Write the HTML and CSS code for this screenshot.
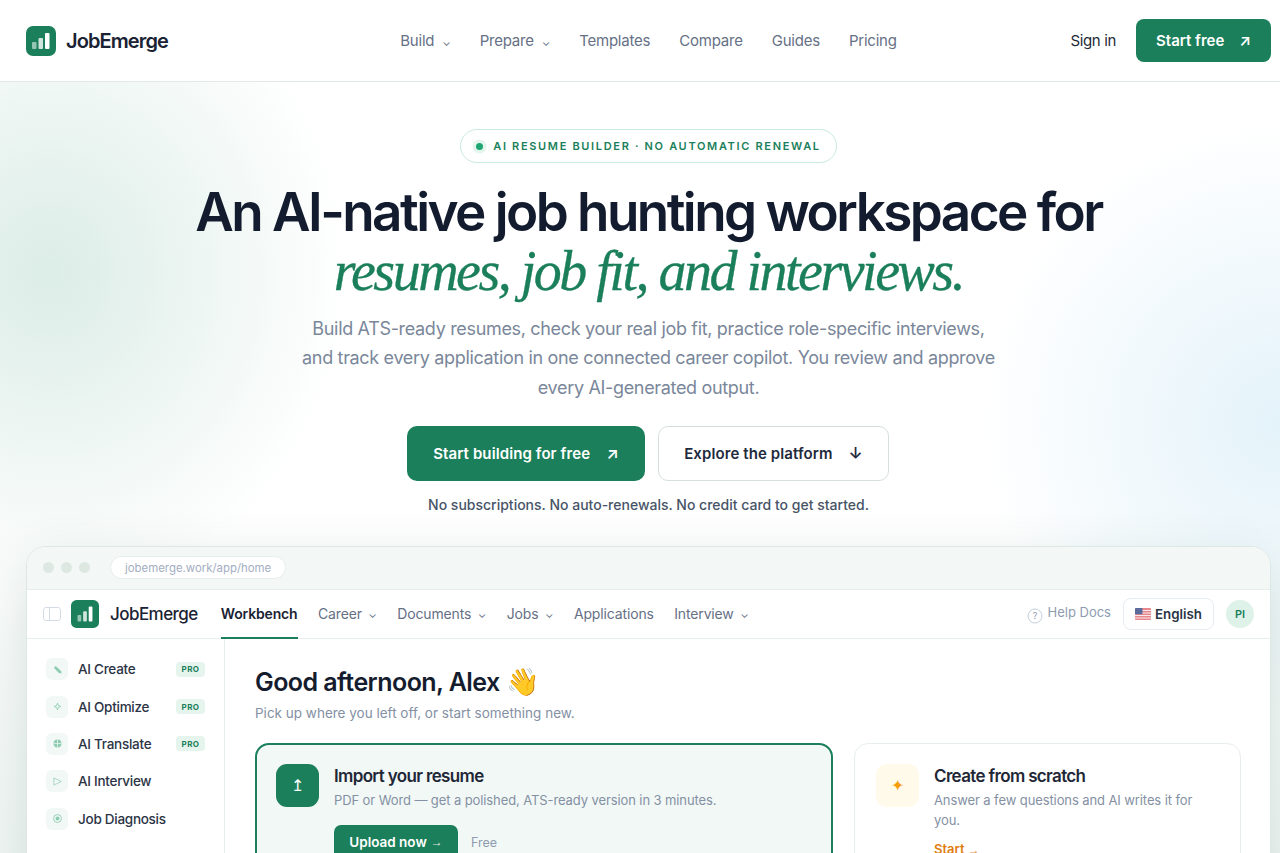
FILE: index.html
```html
<!DOCTYPE html>
<html lang="en">
<head>
<meta charset="utf-8">
<title>JobEmerge</title>
<link rel="stylesheet" href="styles.css">
</head>
<body>
<header class="topbar">
  <a class="brand">
    <svg class="logo" viewBox="0 0 30 30"><rect width="30" height="30" rx="7" fill="#1a7f5a"/><rect x="6" y="16" width="4.5" height="7" rx="1" fill="#fff" opacity=".55"/><rect x="12.5" y="12" width="4.5" height="11" rx="1" fill="#fff" opacity=".8"/><rect x="19" y="7" width="4.5" height="16" rx="1" fill="#fff"/></svg>
    <span class="brand-name">JobEmerge</span>
  </a>
  <nav class="topnav">
    <a>Build<i class="caret">⌄</i></a>
    <a>Prepare<i class="caret">⌄</i></a>
    <a>Templates</a>
    <a>Compare</a>
    <a>Guides</a>
    <a>Pricing</a>
  </nav>
  <div class="top-actions">
    <a class="signin">Sign in</a>
    <a class="btn-top">Start free<span class="btn-arrow">↗</span></a>
  </div>
</header>

<main class="hero">
  <div class="pill"><span class="pill-dot"></span>AI RESUME BUILDER · NO AUTOMATIC RENEWAL</div>
  <h1 class="headline">An AI-native job hunting workspace for<em>resumes, job fit, and interviews.</em></h1>
  <p class="lead">Build ATS-ready resumes, check your real job fit, practice role-specific interviews, and track every application in one connected career copilot. You review and approve every AI-generated output.</p>
  <div class="cta-row">
    <a class="cta cta-primary">Start building for free<span class="cta-icon">↗</span></a>
    <a class="cta cta-ghost">Explore the platform<span class="cta-icon">↓</span></a>
  </div>
  <p class="note">No subscriptions. No auto-renewals. No credit card to get started.</p>

  <section class="window">
    <div class="chrome">
      <span class="light"></span><span class="light"></span><span class="light"></span>
      <span class="url">jobemerge.work/app/home</span>
    </div>
    <div class="appnav">
      <svg class="panel-ico" viewBox="0 0 18 16"><rect x=".5" y="1.5" width="17" height="13" rx="2.5" fill="none" stroke="#d3dbe6"/><path d="M6.5 2v12" stroke="#d3dbe6"/></svg>
      <svg class="app-logo" viewBox="0 0 30 30"><rect width="30" height="30" rx="6" fill="#1a7f5a"/><rect x="7" y="16" width="4" height="7" rx="1" fill="#fff" opacity=".55"/><rect x="13" y="12" width="4" height="11" rx="1" fill="#fff" opacity=".8"/><rect x="19" y="7" width="4" height="16" rx="1" fill="#fff"/></svg>
      <span class="app-name">JobEmerge</span>
      <div class="app-tabs">
        <a class="tab tab-on">Workbench</a>
        <a class="tab">Career<i class="caret">⌄</i></a>
        <a class="tab">Documents<i class="caret">⌄</i></a>
        <a class="tab">Jobs<i class="caret">⌄</i></a>
        <a class="tab">Applications</a>
        <a class="tab">Interview<i class="caret">⌄</i></a>
      </div>
      <div class="app-right">
        <a class="help"><svg class="help-ico" viewBox="0 0 16 16"><circle cx="8" cy="8" r="7" fill="none" stroke="#c3cede"/><text x="8" y="11" text-anchor="middle" class="help-q">?</text></svg><span class="help-text">Help Docs</span></a>
        <a class="lang"><svg class="flag" viewBox="0 0 16 12"><rect width="16" height="12" rx="1" fill="#e8868c"/><path d="M0 2.5h16M0 5h16M0 7.5h16M0 10h16" stroke="#f6e9ea" stroke-width="1.1"/><rect width="7.5" height="6.2" rx="1" fill="#5a6c9c"/></svg>English</a>
        <span class="avatar">PI</span>
      </div>
    </div>
    <div class="app-body">
      <aside class="side">
        <a class="side-item"><span class="side-ico"><svg viewBox="0 0 10 10"><path d="M1 3 3 1l6 5.6.5 2.9-3-.6z" fill="#8fcdb3"/></svg></span>AI Create<b class="pro">PRO</b></a>
        <a class="side-item"><span class="side-ico"><svg viewBox="0 0 10 10"><path d="M5 1.2 6 4l2.8 1L6 6 5 8.8 4 6 1.2 5 4 4z" fill="none" stroke="#8fcdb3"/></svg></span>AI Optimize<b class="pro">PRO</b></a>
        <a class="side-item"><span class="side-ico"><svg viewBox="0 0 10 10"><circle cx="5" cy="5" r="4.4" fill="#8fcdb3"/><path d="M5 .6v8.8M.6 5h8.8" stroke="#f2f8f5" stroke-width=".8"/></svg></span>AI Translate<b class="pro">PRO</b></a>
        <a class="side-item"><span class="side-ico"><svg viewBox="0 0 10 10"><path d="M1 1 9.2 5 1 9z" fill="none" stroke="#8fcdb3" stroke-width=".8"/></svg></span>AI Interview</a>
        <a class="side-item"><span class="side-ico"><svg viewBox="0 0 10 10"><circle cx="5" cy="5" r="4.4" fill="none" stroke="#8fcdb3"/><circle cx="5" cy="5" r="2.2" fill="#8fcdb3"/></svg></span>Job Diagnosis</a>
      </aside>
      <div class="content">
        <h2 class="greet">Good afternoon, Alex <span class="wave">👋</span></h2>
        <p class="greet-sub">Pick up where you left off, or start something new.</p>
        <div class="cards">
          <article class="card card-main">
            <span class="card-ico ico-green">↥</span>
            <div class="card-text">
              <h3>Import your resume</h3>
              <p>PDF or Word — get a polished, ATS-ready version in 3 minutes.</p>
              <div class="card-foot"><a class="upload">Upload now <span class="thin-arrow">→</span></a><span class="free">Free</span></div>
            </div>
          </article>
          <article class="card card-side">
            <span class="card-ico ico-amber">✦</span>
            <div class="card-text">
              <h3>Create from scratch</h3>
              <p>Answer a few questions and AI writes it for you.</p>
              <a class="start">Start <span class="thin-arrow">→</span></a>
            </div>
          </article>
        </div>
      </div>
    </div>
  </section>
</main>
</body>
</html>
```
FILE: styles.css
```css
* { box-sizing: border-box; }
html, body { margin: 0; height: 853px; overflow: hidden; }
body { font-family: "Inter", "Noto Sans", sans-serif; color: #141c2e; background: #fff; }
a { text-decoration: none; color: inherit; }
i { font-style: normal; }

.topbar { height: 82px; display: grid; grid-template-columns: 1fr auto 1fr; align-items: center; padding: 0 9px 0 26px; border-bottom: 1px solid #e1eae7; background: #fff; }
.brand { display: flex; align-items: center; gap: 10px; }
.logo { width: 30px; height: 30px; display: block; }
.brand-name { font-size: 20px; font-weight: 600; letter-spacing: -0.9px; color: #1a2233; }
.topnav { display: flex; gap: 29px; font-size: 15px; color: #667085; letter-spacing: -0.22px; }
.topnav a { display: flex; align-items: baseline; }
.caret { font-size: 11px; margin-left: 8px; }
.top-actions { display: flex; align-items: center; justify-content: flex-end; gap: 20px; }
.signin { font-size: 15px; color: #1f2937; letter-spacing: -0.35px; }
.btn-top { height: 43px; width: 135px; display: flex; align-items: center; justify-content: center; gap: 15px; background: #1a7f5a; color: #fff; border-radius: 8px; font-size: 15px; font-weight: 600; }
.btn-arrow { font-size: 15px; }

.hero { height: 771px; padding: 47px 9px 0 26px; display: flex; flex-direction: column; align-items: center;
  background:
    radial-gradient(ellipse 300px 330px at 50px 190px, rgba(196,224,214,.6), rgba(196,224,214,0) 100%),
    radial-gradient(ellipse 300px 300px at 1280px 340px, rgba(205,232,245,.55), rgba(205,232,245,0) 100%),
    linear-gradient(#fff 420px, #f2f7f5 100%);
}
.hero > * { flex: none; }
.pill { height: 34px; width: 377px; display: flex; align-items: center; justify-content: center; gap: 8px; border: 1px solid #c8ebdc; border-radius: 17px; background: #fff; font-size: 11px; font-weight: 600; letter-spacing: 1.67px; color: #1a7f5a; }
.pill-dot { width: 7px; height: 7px; border-radius: 50%; background: #1ea672; box-shadow: 0 0 0 3.5px #e4f5ed; margin-right: 2px; }
.headline { margin: 20px 0 0; font-size: 53px; line-height: 59px; font-weight: 600; letter-spacing: -2.55px; text-align: center; color: #131b2e; }
.headline em { display: block; font-family: "Liberation Serif", serif; font-style: italic; font-weight: 400; font-size: 56px; letter-spacing: -2.5px; color: #1a7f5a; -webkit-text-stroke: .3px #1a7f5a; }
.lead { margin: 13px 0 0; width: 700px; font-size: 18px; line-height: 29.4px; text-align: center; color: #7a879a; letter-spacing: -0.33px; }
.cta-row { display: flex; gap: 13px; margin: 23.3px 0 0 -1px; }
.cta { height: 55px; display: flex; align-items: center; justify-content: center; gap: 16px; border-radius: 10px; font-size: 15px; font-weight: 600; letter-spacing: .1px; }
.cta-primary { width: 238px; background: #1a7f5a; color: #fff; }
.cta-ghost { width: 231px; background: #fff; color: #1f2a3d; border: 1px solid #d5e0dd; }
.cta-icon { font-size: 16px; }
.note { margin: 15px 0 0; font-size: 14px; line-height: 18px; font-weight: 500; color: #475467; }

.window { width: 1245px; margin: 32px 0 0; border: 1px solid #dde8e4; border-radius: 20px 20px 0 0; background: #fff; box-shadow: 0 24px 60px rgba(26,80,60,.16); }
.chrome { height: 43px; display: flex; align-items: center; padding-left: 16px; gap: 7px; background: #f3f8f6; border-radius: 19px 19px 0 0; border-bottom: 1px solid #e6eeeb; }
.light { width: 11px; height: 11px; border-radius: 50%; background: #dde8e3; }
.url { margin-left: 13px; height: 23px; padding: 0 14px; display: flex; align-items: center; background: #fff; border: 1px solid #e6eeeb; border-radius: 12px; font-size: 11.4px; color: #a3aec2; }
.appnav { height: 49px; display: flex; align-items: center; padding: 0 16px 0 16px; border-bottom: 1px solid #e6eeeb; }
.panel-ico { width: 18px; height: 16px; flex: none; }
.app-logo { width: 28px; height: 28px; margin-left: 10px; flex: none; }
.app-name { margin-left: 11px; font-size: 17px; font-weight: 500; letter-spacing: -0.55px; color: #1a2233; }
.app-tabs { display: flex; height: 49px; gap: 20.5px; margin-left: 23px; }
.tab { display: flex; align-items: center; font-size: 14px; color: #667085; letter-spacing: -0.15px; position: relative; }
.tab .caret { margin-left: 6.5px; font-size: 11px; }
.tab-on { font-weight: 600; color: #1a2233; }
.tab-on::after { content: ""; position: absolute; left: 0; right: 0; bottom: -1px; height: 2px; background: #1a7f5a; }
.app-right { margin-left: auto; display: flex; align-items: center; }
.help { display: flex; align-items: center; gap: 5px; font-size: 13px; color: #8e9bb0; }
.help-ico { width: 16px; height: 16px; margin-top: 4px; }
.help-text { margin-top: -3px; }
.help-q { font-size: 9px; fill: #8e9bb0; }
.lang { margin-left: 12px; height: 32px; width: 91px; display: flex; align-items: center; justify-content: center; gap: 4px; border: 1px solid #e6ecf1; border-radius: 8px; font-size: 13.3px; font-weight: 600; color: #2b3445; }
.flag { width: 16px; height: 12px; }
.avatar { margin-left: 12px; width: 28px; height: 28px; border-radius: 50%; background: #dff2ea; color: #1a7f5a; font-size: 11px; font-weight: 600; display: flex; align-items: center; justify-content: center; }

.app-body { display: flex; }
.side { width: 198px; height: 300px; border-right: 1px solid #e6eeeb; padding: 12px 19px 0 19px; flex: none; }
.side-item { height: 37.4px; display: flex; align-items: center; font-size: 13.5px; font-weight: 500; color: #2b3445; letter-spacing: -0.27px; }
.side-ico { width: 22px; height: 22px; border-radius: 6px; background: #f2f8f5; display: flex; align-items: center; justify-content: center; margin-right: 10px; }
.side-ico svg { width: 9px; height: 9px; }
.pro { margin-left: auto; height: 15px; width: 29px; display: flex; align-items: center; justify-content: center; background: #e6f4ee; border-radius: 4px; font-size: 8px; letter-spacing: .4px; font-weight: 700; color: #1a7f5a; }
.content { flex: 1; padding: 27px 30px 0 30px; }
.greet { margin: 0; font-size: 25px; line-height: 32px; font-weight: 600; letter-spacing: -0.55px; color: #141c2e; }
.wave { font-size: 27px; line-height: 1; letter-spacing: 0; }
.greet-sub { margin: 6px 0 0; font-size: 13.5px; line-height: 18px; color: #8490a3; }
.cards { display: flex; gap: 21px; margin-top: 21px; align-items: flex-start; }
.card { display: flex; gap: 15px; padding: 19px; border-radius: 14px; height: 200px; }
.card-main { width: 578px; background: #f2f8f6; border: 2px solid #1a7f5a; }
.card-side { width: 387px; background: #fff; border: 1px solid #e8eeec; padding: 20px 21px; gap: 15px; }
.card-ico { width: 43px; height: 43px; border-radius: 11px; flex: none; display: flex; align-items: center; justify-content: center; font-size: 16px; }
.ico-green { background: #1a7f5a; color: #fff; }
.ico-amber { background: #fffaea; color: #f59e0b; }
.card-text { padding-top: 1px; }
.card-text h3 { margin: 0; font-size: 17px; line-height: 22px; font-weight: 600; letter-spacing: -0.65px; color: #1f2736; }
.card-text p { margin: 3px 0 0; font-size: 13px; line-height: 20.5px; color: #8490a3; letter-spacing: -0.1px; }
.card-foot { display: flex; align-items: center; gap: 13px; margin-top: 15px; }
.upload { height: 34px; width: 124px; display: flex; align-items: center; justify-content: center; gap: 4px; background: #1a7f5a; color: #fff; border-radius: 7px; font-size: 13.5px; font-weight: 600; }
.thin-arrow { font-family: "Liberation Sans", sans-serif; font-weight: 400; font-size: 12px; opacity: .85; }
.free { font-size: 12.5px; color: #8e9bb0; }
.start { display: block; margin-top: 10px; font-size: 13px; line-height: 16px; font-weight: 600; color: #e07d10; }
```
